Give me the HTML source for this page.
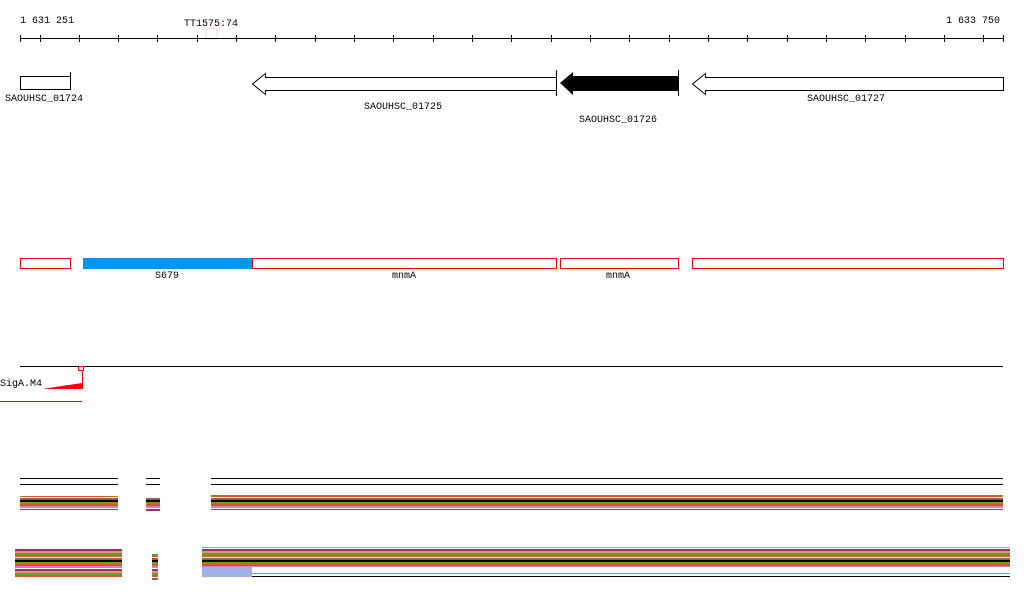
<!DOCTYPE html>
<html><head><meta charset="utf-8"><style>
body{margin:0;background:#fff;width:1024px;height:611px;overflow:hidden}
text{font-family:"Liberation Mono",monospace;font-size:10px;fill:#000}
</style></head><body>
<svg width="1024" height="611" xmlns="http://www.w3.org/2000/svg">
<defs>
<pattern id="s1" width="20" height="20" patternUnits="userSpaceOnUse">
<rect width="20" height="20" fill="#c86a3a"/>
<rect y="0" width="20" height="2" fill="#000"/>
<rect y="2" width="20" height="2" fill="#7a9a10"/>
<rect y="4" width="20" height="2" fill="#e05030"/>
<rect y="6" width="20" height="2" fill="#d080c0"/>
<rect y="8" width="20" height="1" fill="#fff"/>
<rect y="9" width="20" height="2" fill="#a03070"/>
<rect y="11" width="20" height="2" fill="#e09070"/>
<rect y="13" width="20" height="2" fill="#60a030"/>
<rect y="15" width="20" height="2" fill="#d06020"/>
<rect y="17" width="20" height="1" fill="#fff"/>
<rect y="18" width="20" height="2" fill="#906050"/>
</pattern>
</defs>
<!-- axis -->
<text x="20" y="23">1 631 251</text>
<text x="184" y="26">TT1575:74</text>
<text x="946" y="23">1 633 750</text>
<rect x="206" y="28" width="11" height="11" fill="none" stroke="#fcd8c8"/>
<line x1="20" y1="38.5" x2="1003" y2="38.5" stroke="#000"/>
<g stroke="#000">
<line x1="20.5" y1="35" x2="20.5" y2="42"/><line x1="40.5" y1="35" x2="40.5" y2="42"/>
<line x1="79.5" y1="35" x2="79.5" y2="42"/><line x1="118.5" y1="35" x2="118.5" y2="42"/>
<line x1="157.5" y1="35" x2="157.5" y2="42"/><line x1="197.5" y1="35" x2="197.5" y2="42"/>
<line x1="236.5" y1="35" x2="236.5" y2="42"/><line x1="275.5" y1="35" x2="275.5" y2="42"/>
<line x1="315.5" y1="35" x2="315.5" y2="42"/><line x1="354.5" y1="35" x2="354.5" y2="42"/>
<line x1="393.5" y1="35" x2="393.5" y2="42"/><line x1="433.5" y1="35" x2="433.5" y2="42"/>
<line x1="472.5" y1="35" x2="472.5" y2="42"/><line x1="511.5" y1="35" x2="511.5" y2="42"/>
<line x1="551.5" y1="35" x2="551.5" y2="42"/><line x1="590.5" y1="35" x2="590.5" y2="42"/>
<line x1="629.5" y1="35" x2="629.5" y2="42"/><line x1="669.5" y1="35" x2="669.5" y2="42"/>
<line x1="708.5" y1="35" x2="708.5" y2="42"/><line x1="747.5" y1="35" x2="747.5" y2="42"/>
<line x1="787.5" y1="35" x2="787.5" y2="42"/><line x1="826.5" y1="35" x2="826.5" y2="42"/>
<line x1="865.5" y1="35" x2="865.5" y2="42"/><line x1="905.5" y1="35" x2="905.5" y2="42"/>
<line x1="944.5" y1="35" x2="944.5" y2="42"/><line x1="983.5" y1="35" x2="983.5" y2="42"/>
<line x1="1003.5" y1="35" x2="1003.5" y2="42"/>
</g>
<!-- genes -->
<rect x="20.5" y="76.5" width="50" height="13" fill="#fff" stroke="#000"/>
<line x1="70.5" y1="72" x2="70.5" y2="90" stroke="#000"/>
<text x="5" y="101">SAOUHSC_01724</text>
<polygon points="252.5,84 265.5,73.5 265.5,77.5 556.5,77.5 556.5,90.5 265.5,90.5 265.5,94.5" fill="#fff" stroke="#000"/>
<line x1="556.5" y1="70" x2="556.5" y2="96" stroke="#000"/>
<text x="364" y="109">SAOUHSC_01725</text>
<polygon points="560,83 573,72 573,76 678,76 678,91 573,91 573,95" fill="#000"/>
<line x1="678.5" y1="70" x2="678.5" y2="96" stroke="#000"/>
<text x="579" y="122">SAOUHSC_01726</text>
<polygon points="692.5,84 705.5,73.5 705.5,77.5 1003.5,77.5 1003.5,90.5 705.5,90.5 705.5,94.5" fill="#fff" stroke="#000"/>
<text x="807" y="101">SAOUHSC_01727</text>
<!-- red boxes -->
<g fill="none" stroke="#f00">
<rect x="20.5" y="258.5" width="50" height="10"/>
<rect x="252.5" y="258.5" width="304" height="10"/>
<rect x="560.5" y="258.5" width="118" height="10"/>
<rect x="692.5" y="258.5" width="311" height="10"/>
</g>
<rect x="83" y="258" width="169" height="11" fill="#0096f0"/>
<text x="155" y="278">S679</text>
<text x="392" y="278">mnmA</text>
<text x="606" y="278">mnmA</text>
<!-- SigA -->
<line x1="20" y1="366.5" x2="1003" y2="366.5" stroke="#000"/>
<rect x="78.5" y="366.5" width="5" height="4" fill="none" stroke="#f00"/>
<text x="0" y="386">SigA.M4</text>
<polygon points="42,389 82,383 82,370 83,370 83,389" fill="#f00"/>
<line x1="0" y1="401.5" x2="82" y2="401.5" stroke="#f00"/>
<!-- conservation tracks -->
<g stroke="#000">
<line x1="20" y1="478.5" x2="118" y2="478.5"/><line x1="20" y1="484.5" x2="118" y2="484.5"/>
<line x1="146" y1="478.5" x2="160" y2="478.5"/><line x1="146" y1="484.5" x2="160" y2="484.5"/>
<line x1="211" y1="478.5" x2="1003" y2="478.5"/><line x1="211" y1="484.5" x2="1003" y2="484.5"/>
</g>
<rect x="20" y="496" width="98" height="14" fill="url(#s1)"/>
<rect x="146" y="497" width="14" height="14" fill="url(#s1)"/>
<rect x="211" y="495" width="792" height="15" fill="url(#s1)"/>
<rect x="15" y="548" width="107" height="30" fill="url(#s1)"/>
<rect x="152" y="554" width="6" height="26" fill="url(#s1)"/>
<rect x="202" y="547" width="808" height="20" fill="url(#s1)"/>
<line x1="202" y1="576.5" x2="1010" y2="576.5" stroke="#000"/>
<line x1="240" y1="573.5" x2="1010" y2="573.5" stroke="#60a0e0"/>
<rect x="202" y="567" width="50" height="10" fill="#a0b0e0"/>
</svg>
</body></html>
